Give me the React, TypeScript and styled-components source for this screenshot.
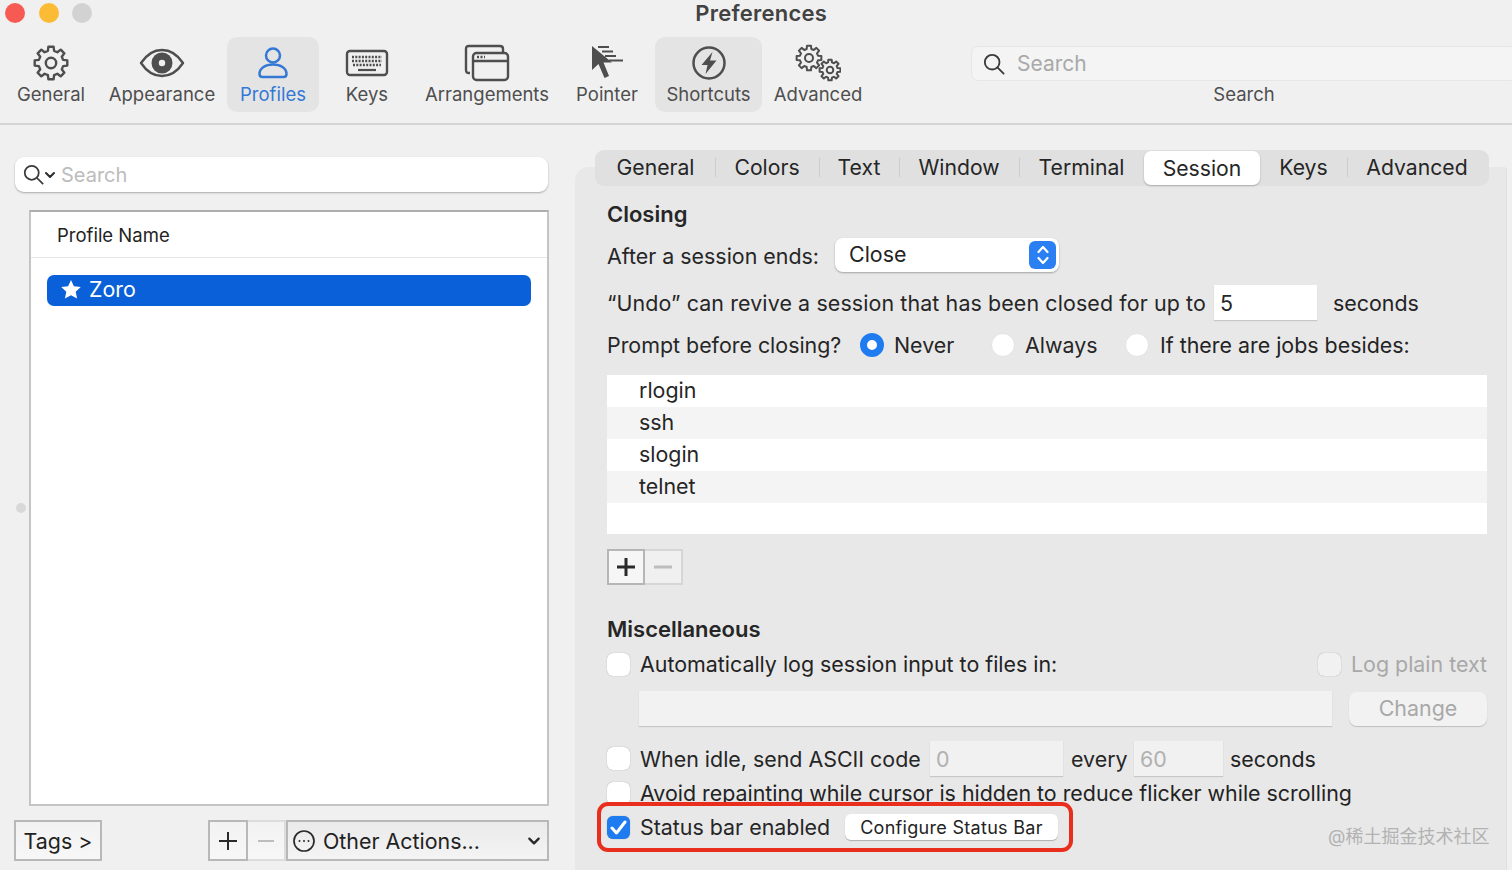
import React from 'react';
import styled, { createGlobalStyle } from 'styled-components';

const Global = createGlobalStyle`
  html, body { margin: 0; padding: 0; background: #f0f0f0; }
  * { box-sizing: border-box; }
  body { font-family: Inter, "Noto Sans CJK SC", sans-serif; color: #232323; }
`;

const Page = styled.div`
  position: relative;
  width: 1512px;
  height: 870px;
  overflow: hidden;
  background: #f0f0f0;
`;

const Header = styled.header`
  height: 125px;
  border-bottom: 2px solid #d4d4d4;
`;

const TitleBar = styled.div`
  display: flex;
  height: 37px;
  padding-left: 5px;
`;

const Lights = styled.div`
  display: flex;
  gap: 13.6px;
  height: 20px;
  margin-top: 3px;
`;

const Light = styled.span<{ $color: string }>`
  width: 20px;
  height: 20px;
  border-radius: 50%;
  background: ${(p) => p.$color};
`;

const Title = styled.div`
  margin-left: 603px;
  font-size: 22px;
  line-height: 27px;
  font-weight: 600;
  letter-spacing: 0.25px;
  color: #424242;
`;

const Toolbar = styled.div`
  display: flex;
  padding-left: 5px;
`;

const ToolItem = styled.div<{ $w: number; $active?: boolean; $blue?: boolean }>`
  flex: none;
  width: ${(p) => p.$w}px;
  height: 75px;
  padding-top: 7px;
  display: flex;
  flex-direction: column;
  align-items: center;
  border-radius: 10px;
  background: ${(p) => (p.$active ? '#e4e4e4' : 'transparent')};
  color: ${(p) => (p.$blue ? '#3478d6' : '#4e4e4e')};
`;

const ToolIcon = styled.div`
  height: 38px;
  display: flex;
  align-items: center;
  justify-content: center;
`;

const ToolLabel = styled.div`
  font-size: 18.5px;
  line-height: 24px;
  white-space: nowrap;
`;

const TopSearch = styled.div`
  width: 546px;
  margin-left: 97px;
  padding-top: 9px;
  display: flex;
  flex-direction: column;
  align-items: center;
  flex: none;
`;

const TopField = styled.div`
  width: 100%;
  height: 35px;
  display: flex;
  align-items: center;
  gap: 12px;
  padding-left: 11px;
  border: 1px solid #e6e6e6;
  border-radius: 7px;
  background: #f4f4f4;
  font-size: 21px;
  color: #a9a9a9;
`;

const TopSearchLabel = styled.div`
  margin-top: 1px;
  font-size: 18.5px;
  line-height: 24px;
  color: #4e4e4e;
`;

const Body = styled.div`
  display: flex;
  height: 745px;
`;

const LeftPane = styled.section`
  width: 575px;
  flex: none;
  padding: 32px 0 0 14px;
  display: flex;
  flex-direction: column;
`;

const ProfileSearch = styled.div`
  width: 533px;
  height: 35px;
  margin-left: 1px;
  display: flex;
  align-items: center;
  padding-left: 8px;
  gap: 5px;
  background: #fff;
  border-radius: 9px;
  box-shadow: 0 1px 2px rgba(0, 0, 0, 0.3);
  font-size: 20px;
  color: #bcbcbc;
`;

const SearchGlyph = styled.span`
  display: flex;
  align-items: center;
`;

const ProfileTable = styled.div`
  width: 520px;
  height: 596px;
  margin: 18px 0 0 15px;
  background: #fff;
  border: 2px solid #c4c4c4;
  border-top-color: #aeaeae;
`;

const TableHead = styled.div`
  height: 46px;
  padding: 0 0 0 26px;
  display: flex;
  align-items: center;
  border-bottom: 1px solid #e6e6e6;
  font-size: 18.5px;
`;

const SelectedRow = styled.div`
  height: 31px;
  margin: 17px 16px 0;
  padding: 0 0 3px 14px;
  display: flex;
  align-items: center;
  gap: 8px;
  border-radius: 7px;
  background: #0a60d8;
  color: #fff;
  font-size: 21.4px;
`;

const Handle = styled.div`
  position: absolute;
  left: 16px;
  top: 503px;
  width: 10px;
  height: 10px;
  border-radius: 50%;
  background: #d8d8d8;
`;

const ActionBar = styled.div`
  display: flex;
  align-items: stretch;
  height: 41px;
  margin-top: 14px;
`;

const SquareButton = styled.div<{ $w: number; $ml?: number; $dim?: boolean }>`
  width: ${(p) => p.$w}px;
  margin-left: ${(p) => p.$ml ?? 0}px;
  display: flex;
  align-items: center;
  justify-content: center;
  border: 2px solid ${(p) => (p.$dim ? '#dcdcdc' : '#b8b8b8')};
  border-left-width: ${(p) => (p.$dim ? 0 : 2)}px;
  background: linear-gradient(#f2f2f2, #f7f7f7);
  font-size: 21.4px;
  color: #222;
`;

const OtherActions = styled.div`
  width: 263px;
  display: flex;
  align-items: center;
  gap: 8px;
  padding: 0 6px 0 5px;
  border: 2px solid #b8b8b8;
  background: linear-gradient(#eaeaea, #f4f4f4);
  font-size: 21.4px;
  color: #222;
`;

const RightPane = styled.section`
  width: 932px;
  flex: none;
  height: 703px;
  margin-top: 42px;
  background: #e8e8e8;
  border-top-left-radius: 14px;
  border-top-right-radius: 4px;
  border-right: 1px solid #e0e0e0;
`;

const TabBar = styled.div`
  display: flex;
  align-items: center;
  width: 894px;
  height: 36px;
  margin: -17px 0 0 20px;
  padding-left: 1px;
  border-radius: 9px;
  background: #e0e0e0;
`;

const Tab = styled.div<{ $w: number; $active?: boolean; $sep?: boolean }>`
  position: relative;
  width: ${(p) => p.$w}px;
  height: ${(p) => (p.$active ? 34 : 36)}px;
  padding-bottom: ${(p) => (p.$active ? 1 : 3)}px;
  display: flex;
  align-items: center;
  justify-content: center;
  font-size: 21.2px;
  color: #262626;
  border-radius: 7px;
  background: ${(p) => (p.$active ? '#fff' : 'transparent')};
  box-shadow: ${(p) => (p.$active ? '0 1px 2px rgba(0,0,0,.25)' : 'none')};
  &::after {
    content: '';
    display: ${(p) => (p.$sep ? 'block' : 'none')};
    position: absolute;
    right: -1px;
    top: 8px;
    width: 1px;
    height: 19px;
    background: #cdcdcd;
  }
`;

const Content = styled.div`
  padding: 14px 19px 0 32px;
`;

const Heading = styled.div`
  height: 28px;
  display: flex;
  align-items: center;
  font-size: 22px;
  font-weight: 600;
  color: #262626;
`;

const Row = styled.div<{ $h: number; $mt: number }>`
  display: flex;
  align-items: center;
  height: ${(p) => p.$h}px;
  margin-top: ${(p) => p.$mt}px;
  font-size: 21.4px;
  white-space: nowrap;
`;

const Gap = styled.span<{ $w: number }>`
  flex: none;
  width: ${(p) => p.$w}px;
`;

const Spring = styled.span`
  flex: 1;
`;

const Text = styled.span<{ $w: number; $dim?: boolean }>`
  flex: none;
  width: ${(p) => p.$w}px;
  color: ${(p) => (p.$dim ? '#a8a8a8' : '#262626')};
`;

const AfterLabel = styled(Text)`
  padding-top: 2px;
`;

const UndoLabel = styled(Text)`
  letter-spacing: 0.12px;
`;

const SelectBox = styled.div`
  width: 224px;
  height: 34px;
  display: flex;
  align-items: center;
  justify-content: space-between;
  padding: 0 3px 2px 14px;
  border-radius: 8px;
  background: #fff;
  box-shadow: 0 1px 2px rgba(0, 0, 0, 0.3);
`;

const Stepper = styled.div`
  width: 27px;
  height: 28px;
  margin-top: 2px;
  display: flex;
  align-items: center;
  justify-content: center;
  border-radius: 6px;
  background: #2a7ff2;
`;

const NumberInput = styled.div<{ $w: number; $off?: boolean }>`
  flex: none;
  width: ${(p) => p.$w}px;
  height: 35px;
  display: flex;
  align-items: center;
  padding-left: 6px;
  background: ${(p) => (p.$off ? '#f1f1f1' : '#fff')};
  color: ${(p) => (p.$off ? '#b0b0b0' : '#262626')};
  box-shadow: 0 1px 1px rgba(0, 0, 0, 0.14);
`;

const Radio = styled.span<{ $on?: boolean }>`
  flex: none;
  width: 24px;
  height: 24px;
  border-radius: 50%;
  background: #fff;
  border: ${(p) => (p.$on ? '7px solid #1f7cf0' : '1px solid #e2e2e2')};
`;

const Check = styled.span<{ $on?: boolean; $off?: boolean }>`
  flex: none;
  width: 23px;
  height: 23px;
  display: flex;
  align-items: center;
  justify-content: center;
  border-radius: 6px;
  background: ${(p) => (p.$on ? '#1f7cf0' : p.$off ? '#f1f1f1' : '#fff')};
  box-shadow: 0 0 1px rgba(0, 0, 0, 0.4);
`;

const JobList = styled.div`
  height: 159px;
  margin-top: 13px;
  background: #fff;
  font-size: 21.4px;
`;

const JobRow = styled.div<{ $odd?: boolean }>`
  height: 32px;
  padding: 0 0 2px 32px;
  display: flex;
  align-items: center;
  background: ${(p) => (p.$odd ? '#f4f4f4' : '#fff')};
  color: #262626;
`;

const PlusMinus = styled.div`
  display: flex;
  width: 76px;
  height: 36px;
  margin-top: 15px;
`;

const PlusMinusCell = styled.div<{ $on?: boolean }>`
  width: 38px;
  display: flex;
  align-items: center;
  justify-content: center;
  border: ${(p) => (p.$on ? '2px solid #b6b6b6' : '2px solid #d6d6d6')};
  border-left-width: ${(p) => (p.$on ? 2 : 0)}px;
  background: ${(p) => (p.$on ? '#f6f6f6' : '#f0f0f0')};
`;

const PathField = styled.div`
  width: 693px;
  height: 35px;
  margin-left: 32px;
  background: #f2f2f2;
  box-shadow: 0 1px 1px rgba(0, 0, 0, 0.14);
`;

const ChangeButton = styled.div`
  width: 138px;
  height: 34px;
  margin-left: 17px;
  margin-top: 2px;
  padding-bottom: 2px;
  display: flex;
  align-items: center;
  justify-content: center;
  border-radius: 8px;
  background: #f2f2f2;
  box-shadow: 0 1px 1px rgba(0, 0, 0, 0.18);
  color: #a8a8a8;
`;

const StatusHighlight = styled.div`
  position: relative;
  display: flex;
  align-items: center;
  width: 476px;
  height: 50px;
  margin: -5px 0 0 -10px;
  padding-left: 6px;
  border: 4px solid #ea2e1e;
  border-radius: 11px;
  background: #e8e8e8;
  font-size: 21.4px;
  white-space: nowrap;
`;

const ConfigureButton = styled.div`
  width: 213px;
  height: 26px;
  display: flex;
  align-items: center;
  justify-content: center;
  border-radius: 6px;
  background: #fff;
  box-shadow: 0 1px 1px rgba(0, 0, 0, 0.25);
  font-size: 18px;
  letter-spacing: 0.3px;
`;

const Watermark = styled.div`
  position: absolute;
  left: 1328px;
  top: 826px;
  font-size: 18px;
  line-height: 22px;
  color: #b2b2b2;
  white-space: nowrap;
`;

// gear outline, teeth alternate between two radii
const gearPath = (cx: number, cy: number, outer: number, inner: number, teeth: number) => {
  const pts: string[] = [];
  const step = (Math.PI * 2) / teeth;
  for (let i = 0; i < teeth; i++) {
    const a = i * step;
    const angles = [a - step * 0.2, a + step * 0.2, a + step * 0.32, a + step * 0.68];
    const radii = [outer, outer, inner, inner];
    angles.forEach((t, k) => {
      pts.push(`${(cx + radii[k] * Math.cos(t)).toFixed(2)} ${(cy + radii[k] * Math.sin(t)).toFixed(2)}`);
    });
  }
  return `M${pts.join('L')}Z`;
};

const Gear = () => (
  <svg width="36" height="36" viewBox="0 0 36 36" fill="none" stroke="currentColor" strokeWidth="2.4" strokeLinejoin="round">
    <path d={gearPath(18, 18, 16.5, 12.5, 8)} />
    <circle cx="18" cy="18" r="5.2" />
  </svg>
);

const Eye = () => (
  <svg width="46" height="30" viewBox="0 0 46 30" fill="none">
    <path d="M2 15C8 6 15 2 23 2s15 4 21 13c-6 9-13 13-21 13S8 24 2 15Z" stroke="currentColor" strokeWidth="2.4" strokeLinejoin="round" />
    <circle cx="23" cy="15" r="10.5" fill="currentColor" />
    <circle cx="23" cy="15" r="3.2" fill="#f0f0f0" />
  </svg>
);

const Person = () => (
  <svg width="32" height="34" viewBox="0 0 32 34" fill="none" stroke="currentColor" strokeWidth="2.5">
    <circle cx="16" cy="9.5" r="7" />
    <path d="M2.5 28c0-6 6-9.5 13.5-9.5S29.5 22 29.5 28c0 2-1 3-3 3h-21c-2 0-3-1-3-3Z" strokeLinejoin="round" />
  </svg>
);

const KeyboardIcon = () => (
  <svg width="44" height="28" viewBox="0 0 44 28" fill="none">
    <rect x="2" y="2" width="40" height="24" rx="3" stroke="currentColor" strokeWidth="2.4" />
    <path d="M7 8h30M7 12h30M8 16h28" stroke="currentColor" strokeWidth="2.4" strokeDasharray="2 1.3" />
    <path d="M13 21h18" stroke="currentColor" strokeWidth="2.2" />
  </svg>
);

const Windows = () => (
  <svg width="46" height="38" viewBox="0 0 46 38" fill="none" stroke="currentColor" strokeWidth="2.4">
    <path d="M6 29H5c-2 0-3-1-3-3V5c0-2 1-3 3-3h31c2 0 3 1 3 3v4" />
    <rect x="9" y="9" width="35" height="27" rx="3.5" />
    <path d="M9 17h35" />
    <path d="M13 13h8" strokeDasharray="2 1.5" />
  </svg>
);

const PointerIcon = () => (
  <svg width="36" height="36" viewBox="0 0 36 36" fill="currentColor">
    <path d="M3 1 3 25l6.5-6 6 14 4.500-2-5.500-13.500H23Z" />
    <path d="M9 1h11v2H9ZM13 5.500h11v2H13ZM16 10h11v2H16ZM20 14.500h14v2H20Z" />
  </svg>
);

const Bolt = () => (
  <svg width="36" height="36" viewBox="0 0 36 36" fill="none">
    <circle cx="18" cy="18" r="15.5" stroke="currentColor" strokeWidth="2.5" />
    <path d="M21.500 7 10.500 20h6L14.500 29 25.500 15.500h-6.500Z" fill="currentColor" />
  </svg>
);

const Gears = () => (
  <svg width="46" height="38" viewBox="0 0 46 38" fill="none" stroke="currentColor" strokeWidth="2" strokeLinejoin="round">
    <path d={gearPath(14, 14, 12.5, 9.3, 8)} />
    <circle cx="14" cy="14" r="4" />
    <path d={gearPath(35, 26, 10.5, 7.8, 8)} />
    <circle cx="35" cy="26" r="3.3" />
  </svg>
);

const Magnifier = ({ size = 24 }: { size?: number }) => (
  <svg width={size} height={size} viewBox="0 0 24 24" fill="none" stroke="#3a3a3a" strokeWidth="2">
    <circle cx="10" cy="10" r="8" />
    <path d="m16 16 6.5 6.5" strokeLinecap="round" />
  </svg>
);

const Chevron = ({ size = 12 }: { size?: number }) => (
  <svg width={size} height={size} viewBox="0 0 12 12" fill="none" stroke="#2a2a2a" strokeWidth="2" strokeLinecap="round" strokeLinejoin="round">
    <path d="m2 4 4 4 4-4" />
  </svg>
);

const tabs = [
  { label: 'General', w: 119, sep: true },
  { label: 'Colors', w: 104, sep: true },
  { label: 'Text', w: 80, sep: true },
  { label: 'Window', w: 120, sep: true },
  { label: 'Terminal', w: 125 },
  { label: 'Session', w: 116, active: true },
  { label: 'Keys', w: 87, sep: true },
  { label: 'Advanced', w: 140 },
];

const App = (): React.ReactElement => {
  return (
    <Page>
      <Global />
      <Header>
        <TitleBar>
          <Lights>
            <Light $color="#f65a52" />
            <Light $color="#fcbb35" />
            <Light $color="#d2d2d2" />
          </Lights>
          <Title>Preferences</Title>
        </TitleBar>
        <Toolbar>
          <ToolItem $w={92}><ToolIcon><Gear /></ToolIcon><ToolLabel>General</ToolLabel></ToolItem>
          <ToolItem $w={130}><ToolIcon><Eye /></ToolIcon><ToolLabel>Appearance</ToolLabel></ToolItem>
          <ToolItem $w={92} $active $blue><ToolIcon><Person /></ToolIcon><ToolLabel>Profiles</ToolLabel></ToolItem>
          <ToolItem $w={96}><ToolIcon><KeyboardIcon /></ToolIcon><ToolLabel>Keys</ToolLabel></ToolItem>
          <ToolItem $w={144}><ToolIcon><Windows /></ToolIcon><ToolLabel>Arrangements</ToolLabel></ToolItem>
          <ToolItem $w={96}><ToolIcon><PointerIcon /></ToolIcon><ToolLabel>Pointer</ToolLabel></ToolItem>
          <ToolItem $w={107} $active><ToolIcon><Bolt /></ToolIcon><ToolLabel>Shortcuts</ToolLabel></ToolItem>
          <ToolItem $w={112}><ToolIcon><Gears /></ToolIcon><ToolLabel>Advanced</ToolLabel></ToolItem>
          <TopSearch>
            <TopField><Magnifier size={22} />Search</TopField>
            <TopSearchLabel>Search</TopSearchLabel>
          </TopSearch>
        </Toolbar>
      </Header>
      <Body>
        <LeftPane>
          <ProfileSearch>
            <SearchGlyph>
              <Magnifier size={21} />
              <Chevron />
            </SearchGlyph>
            Search
          </ProfileSearch>
          <ProfileTable>
            <TableHead>Profile Name</TableHead>
            <SelectedRow>
              <svg width="20" height="19" viewBox="0 0 20 19" fill="#fff">
                <path d="m10 0 2.9 6.3 6.9.8-5.1 4.7 1.4 6.8L10 15.2l-6.1 3.4 1.4-6.8L.2 7.1l6.9-.8Z" />
              </svg>
              Zoro
            </SelectedRow>
          </ProfileTable>
          <ActionBar>
            <SquareButton $w={88}>Tags &gt;</SquareButton>
            <SquareButton $w={40} $ml={106}>
              <svg width="18" height="18" viewBox="0 0 18 18" stroke="#2a2a2a" strokeWidth="2"><path d="M9 0v18M0 9h18" /></svg>
            </SquareButton>
            <SquareButton $w={38} $dim>
              <svg width="18" height="18" viewBox="0 0 18 18" stroke="#bdbdbd" strokeWidth="2"><path d="M1 9h16" /></svg>
            </SquareButton>
            <OtherActions>
              <svg width="22" height="22" viewBox="0 0 22 22" fill="none" stroke="#2a2a2a" strokeWidth="1.7">
                <circle cx="11" cy="11" r="10" />
                <circle cx="6.5" cy="11" r="1" fill="#2a2a2a" stroke="none" />
                <circle cx="11" cy="11" r="1" fill="#2a2a2a" stroke="none" />
                <circle cx="15.5" cy="11" r="1" fill="#2a2a2a" stroke="none" />
              </svg>
              Other Actions...
              <Spring />
              <Chevron size={14} />
            </OtherActions>
          </ActionBar>
        </LeftPane>
        <Handle />
        <RightPane>
          <TabBar>
            {tabs.map((t) => (
              <Tab key={t.label} $w={t.w} $active={t.active} $sep={t.sep}>{t.label}</Tab>
            ))}
          </TabBar>
          <Content>
            <Heading>Closing</Heading>
            <Row $h={34} $mt={10}>
              <AfterLabel $w={228}>After a session ends:</AfterLabel>
              <SelectBox>
                Close
                <Stepper>
                  <svg width="14" height="22" viewBox="0 0 14 22" fill="none" stroke="#fff" strokeWidth="2.2" strokeLinecap="round" strokeLinejoin="round">
                    <path d="m2.5 8 4.5-5 4.5 5M2.5 14l4.5 5 4.5-5" />
                  </svg>
                </Stepper>
              </SelectBox>
            </Row>
            <Row $h={35} $mt={13}>
              <UndoLabel $w={607}>“Undo” can revive a session that has been closed for up to</UndoLabel>
              <NumberInput $w={103}>5</NumberInput>
              <Gap $w={16} />
              seconds
            </Row>
            <Row $h={34} $mt={8}>
              <Text $w={253}>Prompt before closing?</Text>
              <Radio $on />
              <Gap $w={10} />
              <Text $w={97}>Never</Text>
              <Radio />
              <Gap $w={10} />
              <Text $w={100}>Always</Text>
              <Radio />
              <Gap $w={11} />
              If there are jobs besides:
            </Row>
            <JobList>
              <JobRow>rlogin</JobRow>
              <JobRow $odd>ssh</JobRow>
              <JobRow>slogin</JobRow>
              <JobRow $odd>telnet</JobRow>
            </JobList>
            <PlusMinus>
              <PlusMinusCell $on>
                <svg width="18" height="18" viewBox="0 0 18 18" stroke="#2a2a2a" strokeWidth="3"><path d="M9 0v18M0 9h18" /></svg>
              </PlusMinusCell>
              <PlusMinusCell>
                <svg width="18" height="18" viewBox="0 0 18 18" stroke="#bdbdbd" strokeWidth="3"><path d="M0 9h18" /></svg>
              </PlusMinusCell>
            </PlusMinus>
            <Row $h={28} $mt={30}>
              <Heading>Miscellaneous</Heading>
            </Row>
            <Row $h={28} $mt={7}>
              <Check />
              <Gap $w={10} />
              Automatically log session input to files in:
              <Spring />
              <Check $off />
              <Gap $w={10} />
              <Text $w={136} $dim>Log plain text</Text>
            </Row>
            <Row $h={36} $mt={12}>
              <PathField />
              <ChangeButton>Change</ChangeButton>
            </Row>
            <Row $h={35} $mt={15}>
              <Check />
              <Gap $w={10} />
              <Text $w={290}>When idle, send ASCII code</Text>
              <NumberInput $w={133} $off>0</NumberInput>
              <Gap $w={8} />
              <Text $w={63}>every</Text>
              <NumberInput $w={89} $off>60</NumberInput>
              <Gap $w={7} />
              seconds
            </Row>
            <Row $h={28} $mt={3}>
              <Check />
              <Gap $w={10} />
              Avoid repainting while cursor is hidden to reduce flicker while scrolling
            </Row>
            <StatusHighlight>
              <Check $on>
                <svg width="17" height="15" viewBox="0 0 17 15" fill="none" stroke="#fff" strokeWidth="3" strokeLinecap="round" strokeLinejoin="round">
                  <path d="m2 8 4.5 5L15 2" />
                </svg>
              </Check>
              <Gap $w={10} />
              <Text $w={205}>Status bar enabled</Text>
              <ConfigureButton>Configure Status Bar</ConfigureButton>
            </StatusHighlight>
          </Content>
        </RightPane>
      </Body>
      <Watermark>@稀土掘金技术社区</Watermark>
    </Page>
  );
};

export default App;
